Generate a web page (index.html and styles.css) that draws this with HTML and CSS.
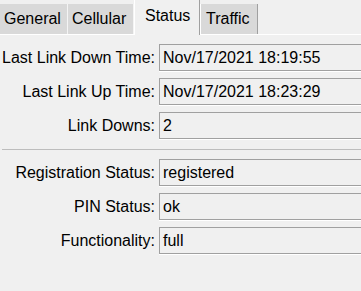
FILE: index.html
```html
<!DOCTYPE html>
<html lang="en">
<head>
  <meta charset="UTF-8" />
  <title>Status</title>
  <link rel="stylesheet" href="styles.css">
</head>
<body>
  <div class="tabs">
    <div class="tab">General</div>
    <div class="tab">Cellular</div>
    <div class="tab active">Status</div>
    <div class="tab last">Traffic</div>
  </div>

  <div class="panel">
    <div class="row">
      <label>Last Link Down Time:</label>
      <div class="field">Nov/17/2021 18:19:55</div>
    </div>
    <div class="row">
      <label>Last Link Up Time:</label>
      <div class="field">Nov/17/2021 18:23:29</div>
    </div>
    <div class="row">
      <label>Link Downs:</label>
      <div class="field">2</div>
    </div>

    <hr class="sep">

    <div class="row">
      <label>Registration Status:</label>
      <div class="field">registered</div>
    </div>
    <div class="row">
      <label>PIN Status:</label>
      <div class="field">ok</div>
    </div>
    <div class="row">
      <label>Functionality:</label>
      <div class="field">full</div>
    </div>
  </div>
</body>
</html>
```

FILE: styles.css
```css
body {
  margin: 0;
  background: #f0f0f0;
  font-family: "Liberation Sans", Arial, sans-serif;
  font-size: 16px;
  color: #000;
  overflow: hidden;
}
.tabs {
  display: flex;
  align-items: flex-end;
  height: 34px;
  border-bottom: 1px solid #fff;
}
.tab {
  height: 30px;
  line-height: 30px;
  padding: 0 4px;
  background: #d9d9d9;
  border-right: 1px solid #f4f4f4;
  box-sizing: border-box;
}
.tab:first-child {
  width: 68px;
}
.tab:nth-child(2) {
  width: 66px;
}
.tab.active {
  width: 66px;
  height: 35px;
  margin-bottom: -1px;
  line-height: 32px;
  background: #f0f0f0;
  border-left: 1px solid #fff;
  border-right: 1px solid #a0a0a0;
  padding-left: 10px;
}
.tab.last {
  width: 58px;
  border-left: 1px solid #fff;
  border-right: 1px solid #a0a0a0;
  padding-left: 5px;
}
.panel {
  padding-top: 9px;
}
.row {
  display: grid;
  grid-template-columns: 155px 220px;
  column-gap: 4px;
  align-items: center;
  height: 27px;
  margin-bottom: 7px;
}
.row label {
  text-align: right;
}
.field {
  height: 27px;
  line-height: 25px;
  box-sizing: border-box;
  border: 1px solid #a0a0a0;
  box-shadow: 0 1px 0 #fff;
  padding: 0 3px;
  white-space: nowrap;
}
.sep {
  margin: 10px 0 9px 2px;
  border: 0;
  border-top: 1px solid #bdbdbd;
  height: 0;
}
```
